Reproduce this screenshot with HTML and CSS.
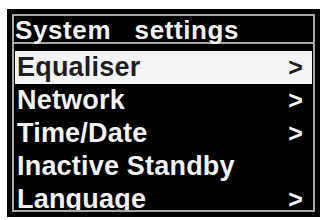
FILE: index.html
```html
<!DOCTYPE html>
<html lang="en">
  <head>
    <meta charset="UTF-8" />
    <meta name="viewport" content="width=device-width, initial-scale=1.0" />
    <title>System settings</title>
    <link rel="stylesheet" href="styles.css">
  </head>

  <body>
    <div class="lcd">
      <div class="screen">
        <div class="title">System   settings</div>
        <ul class="menu">
          <li class="selected"><span>Equaliser</span><span class="arrow">&gt;</span></li>
          <li><span>Network</span><span class="arrow">&gt;</span></li>
          <li><span>Time/Date</span><span class="arrow">&gt;</span></li>
          <li><span>Inactive Standby</span></li>
          <li><span>Language</span><span class="arrow">&gt;</span></li>
        </ul>
      </div>
    </div>
  </body>
</html>
```

FILE: styles.css
```css
* {
  margin: 0;
  padding: 0;
  box-sizing: border-box;
}

body {
  font-family: "Liberation Sans", Arial, sans-serif;
  font-weight: bold;
  background-color: #fff;
  padding: 9px 3px 0 7px;
}

.lcd {
  width: 313px;
  height: 208px;
  background-color: #000;
  padding: 5px;
}

.screen {
  height: 100%;
  border: 2px solid #a8a8a8;
  overflow: hidden;
  color: #f2f2f2;
}

.title {
  height: 28px;
  line-height: 29px;
  font-size: 26px;
  letter-spacing: 0.6px;
  padding-left: 1px;
  white-space: pre;
  border-bottom: 2px solid #a8a8a8;
}

.menu {
  list-style: none;
  margin-top: 7px;
}

.menu li {
  display: flex;
  justify-content: space-between;
  height: 33px;
  line-height: 33px;
  font-size: 27px;
  letter-spacing: 0.2px;
  padding: 0 9px 0 2px;
  margin: 0 1px;
}

.menu li.selected {
  background-color: #f4f4f4;
  color: #1e1e1e;
}

.arrow {
  font-size: 25px;
}
```
